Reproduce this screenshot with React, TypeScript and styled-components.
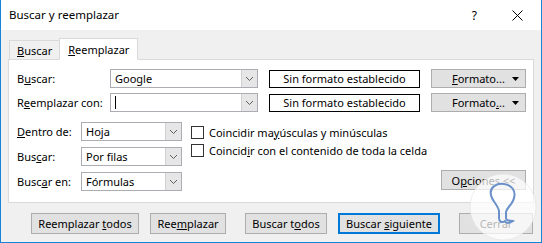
import { ReactElement, ReactNode } from "react";
import styled, { createGlobalStyle } from "styled-components";

const GlobalStyle = createGlobalStyle`
  html, body {
    margin: 0;
    padding: 0;
    background: #ffffff;
  }
  * {
    box-sizing: border-box;
  }
`;

const Chevron = (): ReactElement => (
  <svg width="9" height="6" viewBox="0 0 9 6">
    <polyline points="1,1 4.5,4.5 8,1" fill="none" stroke="#606060" strokeWidth="1" />
  </svg>
);

const Caret = (): ReactElement => (
  <svg width="7" height="4" viewBox="0 0 7 4">
    <polygon points="0,0 7,0 3.5,4" fill="#000" />
  </svg>
);

type ComboProps = {
  value: string;
  width: number;
  caret?: boolean;
};

const Combo = ({ value, width, caret }: ComboProps): ReactElement => (
  <ComboBox width={width}>
    <ComboText>
      <span>{value}</span>
      {caret && <TextCaret />}
    </ComboText>
    <ComboButton>
      <Chevron />
    </ComboButton>
  </ComboBox>
);

type FieldRowProps = {
  label: ReactNode;
  value: string;
  format?: ReactNode;
  caret?: boolean;
};

const TopRow = ({ label, value, format, caret }: FieldRowProps): ReactElement => (
  <Row>
    <TopLabel>{label}</TopLabel>
    <Combo value={value} width={148} caret={caret} />
    <FormatBox>Sin formato establecido</FormatBox>
    <FormatButton>
      <span>{format}</span>
      <Caret />
    </FormatButton>
  </Row>
);

const SelectRow = ({ label, value }: FieldRowProps): ReactElement => (
  <Row>
    <SelectLabel>{label}</SelectLabel>
    <Combo value={value} width={101} />
  </Row>
);

export default function App(): ReactElement {
  return (
    <>
      <GlobalStyle />
      <Window>
        <TitleBar>
          <Title>Buscar y reemplazar</Title>
          <TitleButtons>
            <Help>?</Help>
            <svg width="11" height="11" viewBox="0 0 11 11">
              <path d="M0.5 0.5 L10.5 10.5 M10.5 0.5 L0.5 10.5" stroke="#000" strokeWidth="1" />
            </svg>
          </TitleButtons>
        </TitleBar>
        <Body>
          <Tabs>
            <Tab>
              <span>
                <u>B</u>uscar
              </span>
            </Tab>
            <Tab active>
              <span>
                <u>R</u>eemplazar
              </span>
            </Tab>
          </Tabs>
          <Panel>
            <TopRows>
              <TopRow
                label={
                  <>
                    B<u>u</u>scar:
                  </>
                }
                value="Google"
                format={
                  <>
                    <u>F</u>ormato...
                  </>
                }
              />
              <TopRow
                label={
                  <>
                    R<u>e</u>emplazar con:
                  </>
                }
                value=""
                caret
                format={
                  <>
                    Formato<u>.</u>..
                  </>
                }
              />
            </TopRows>
            <Lower>
              <SelectColumn>
                <SelectRow
                  label={
                    <>
                      <u>D</u>entro de:
                    </>
                  }
                  value="Hoja"
                />
                <SelectRow
                  label={
                    <>
                      Bus<u>c</u>ar:
                    </>
                  }
                  value="Por filas"
                />
                <SelectRow
                  label={
                    <>
                      Busc<u>a</u>r en:
                    </>
                  }
                  value="Fórmulas"
                />
              </SelectColumn>
              <CheckColumn>
                <CheckRow>
                  <CheckBox />
                  <span>
                    Coincidir ma<u>y</u>úsculas y minúsculas
                  </span>
                </CheckRow>
                <CheckRow>
                  <CheckBox />
                  <span>
                    Coincid<u>i</u>r con el contenido de toda la celda
                  </span>
                </CheckRow>
              </CheckColumn>
              <OptionsButton>
                <span>
                  O<u>p</u>ciones &lt;&lt;
                </span>
              </OptionsButton>
            </Lower>
          </Panel>
          <Footer>
            <Button width={108}>
              <span>
                Reemplazar <u>t</u>odos
              </span>
            </Button>
            <Button width={76}>
              <span>
                Ree<u>m</u>plazar
              </span>
            </Button>
            <Button width={82}>
              <span>
                Buscar t<u>o</u>dos
              </span>
            </Button>
            <Button width={102} primary>
              <span>
                Buscar <u>s</u>iguiente
              </span>
            </Button>
            <Button width={74}>
              <span>Cerrar</span>
            </Button>
          </Footer>
        </Body>
        <Watermark width="68" height="68" viewBox="0 0 68 68">
          <circle cx="34" cy="34" r="33" fill="rgba(255,255,255,0.7)" stroke="rgba(225,225,225,0.6)" />
          <path
            d="M22 22 C20 14 28 10 35 11 C43 12 47 18 45 25 C44 31 38 34 37 39 L37 45 C37 49 42 47 44 48 C41 50 37 51 36 48 M22 22 C23 28 29 32 30 38 L30 45 C30 49 33 50 36 48"
            fill="none"
            stroke="#6a91c9"
            strokeWidth="2"
            strokeLinecap="round"
          />
        </Watermark>
      </Window>
    </>
  );
}

const Window = styled.div`
  position: relative;
  width: 542px;
  height: 243px;
  display: flex;
  flex-direction: column;
  border-left: 1px solid #1883d7;
  border-right: 1px solid #1883d7;
  border-bottom: 1px solid #1883d7;
  font-family: "Noto Sans", sans-serif;
  font-size: 11px;
  color: #000;
  overflow: hidden;
  white-space: nowrap;
`;

const TitleBar = styled.div`
  height: 30px;
  flex-shrink: 0;
  background: #ffffff;
  display: flex;
  align-items: center;
  justify-content: space-between;
  padding: 0 18px 0 8px;
`;

const Title = styled.div`
  font-size: 11.5px;
  padding-bottom: 1px;
`;

const TitleButtons = styled.div`
  display: flex;
  align-items: center;
  gap: 35px;
`;

const Help = styled.span`
  font-size: 12px;
`;

const Body = styled.div`
  flex: 1;
  background: #f0f0f0;
  padding: 8px 7px 0 7px;
  display: flex;
  flex-direction: column;
`;

const Tabs = styled.div`
  display: flex;
  align-items: flex-end;
  height: 22px;
  padding-left: 1px;
  position: relative;
  z-index: 1;
`;

const Tab = styled.div<{ active?: boolean }>`
  height: ${({ active }) => (active ? "22px" : "20px")};
  padding: 1px ${({ active }) => (active ? "8px" : "7px")} 0;
  display: flex;
  align-items: center;
  background: ${({ active }) => (active ? "#ffffff" : "#f0f0f0")};
  border: 1px solid #d9d9d9;
  border-bottom: ${({ active }) => (active ? "1px solid #ffffff" : "1px solid #d9d9d9")};
  margin-left: ${({ active }) => (active ? "-1px" : "0")};
`;

const Panel = styled.div`
  margin-top: -1px;
  width: 526px;
  height: 144px;
  background: #ffffff;
  border: 1px solid #d9d9d9;
  padding: 9px 7px 0 8px;
  display: flex;
  flex-direction: column;
`;

const TopRows = styled.div`
  display: flex;
  flex-direction: column;
  gap: 5px;
`;

const Row = styled.div`
  display: flex;
  align-items: center;
  height: 19px;
`;

const TopLabel = styled.div`
  width: 93px;
`;

const SelectLabel = styled.div`
  width: 64px;
`;

const ComboBox = styled.div<{ width: number }>`
  width: ${({ width }) => width}px;
  height: 19px;
  display: flex;
  border: 1px solid #abadb3;
`;

const ComboText = styled.div`
  flex: 1;
  display: flex;
  align-items: center;
  padding-left: 4px;
`;

const TextCaret = styled.span`
  display: inline-block;
  width: 1px;
  height: 13px;
  background: #000;
`;

const ComboButton = styled.div`
  width: 16px;
  display: flex;
  align-items: center;
  justify-content: center;
  background: #e6e6e6;
  border-left: 1px solid #d0d0d0;
`;

const FormatBox = styled.div`
  margin-left: 11px;
  width: 151px;
  height: 18px;
  border: 1px solid #000;
  display: flex;
  align-items: center;
  justify-content: center;
`;

const FormatButton = styled.div`
  margin-left: 11px;
  width: 95px;
  height: 19px;
  background: #e1e1e1;
  border: 1px solid #adadad;
  display: flex;
  align-items: center;
  justify-content: space-between;
  padding: 0 6px 0 20px;
`;

const Lower = styled.div`
  margin-top: 10px;
  display: flex;
  align-items: flex-start;
`;

const SelectColumn = styled.div`
  display: flex;
  flex-direction: column;
  gap: 6px;
`;

const CheckColumn = styled.div`
  margin-left: 9px;
  padding-top: 3px;
  display: flex;
  flex-direction: column;
  gap: 4px;
  flex: 1;
`;

const CheckRow = styled.div`
  display: flex;
  align-items: center;
  gap: 5px;
  height: 14px;
`;

const CheckBox = styled.span`
  width: 13px;
  height: 13px;
  border: 1px solid #333;
  background: #fff;
  flex-shrink: 0;
`;

const OptionsButton = styled.div`
  align-self: flex-end;
  margin-bottom: 1px;
  width: 85px;
  height: 20px;
  background: #e1e1e1;
  border: 1px solid #adadad;
  display: flex;
  align-items: center;
  justify-content: center;
`;

const Footer = styled.div`
  display: flex;
  align-items: center;
  padding: 10px 0 0 23px;
  gap: 11px;
`;

const Button = styled.div<{ width: number; primary?: boolean }>`
  width: ${({ width }) => width}px;
  height: 21px;
  background: #e1e1e1;
  border: ${({ primary }) => (primary ? "2px solid #0078d7" : "1px solid #adadad")};
  display: flex;
  align-items: center;
  justify-content: center;
  &:nth-child(2) {
    margin-right: 8px;
  }
  &:nth-child(4) {
    margin-right: 8px;
  }
`;

const Watermark = styled.svg`
  position: absolute;
  left: 468px;
  top: 173px;
`;
